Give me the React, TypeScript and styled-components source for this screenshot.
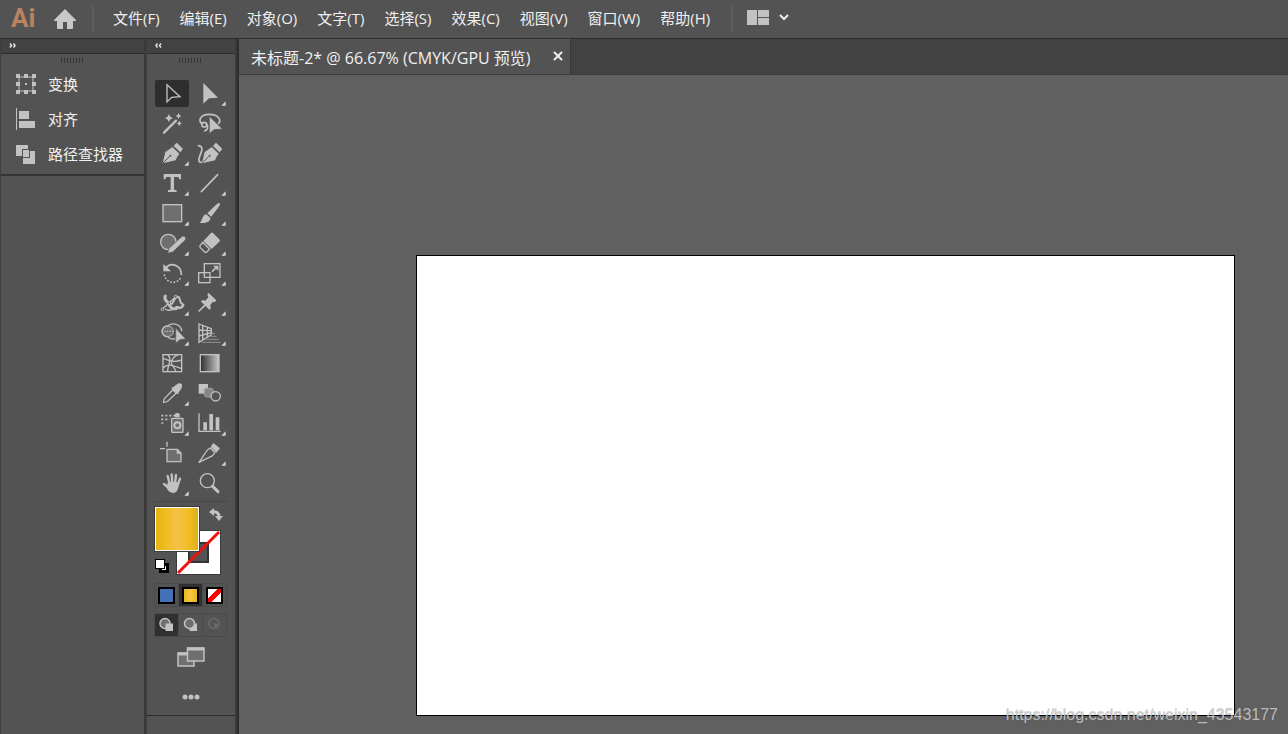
import React from "react";
import styled, { createGlobalStyle } from "styled-components";

const LIGHT = "#c2c2c2";
const MID = "#6f6f6f";
const PANEL = "#535353";
const DARK = "#424242";
const LINE = "#2d2d2d";

const GlobalStyle = createGlobalStyle`
  * { box-sizing: border-box; }
  body {
    margin: 0;
    background: ${PANEL};
    color: #f0f0f0;
    font-family: "Open Sans", "Noto Sans CJK SC", sans-serif;
    font-size: 15px;
  }
  button {
    margin: 0;
    padding: 0;
    border: 0;
    background: none;
    color: inherit;
    font: inherit;
  }
  svg { display: block; }
`;

const Page = styled.div`
  display: flex;
  flex-direction: column;
  min-height: 100vh;
`;

/* ---------- top bar ---------- */

const TopBar = styled.header`
  display: flex;
  align-items: center;
  height: 39px;
  padding-left: 11px;
  border-bottom: 1px solid ${LINE};
  background: ${PANEL};
`;

const Logo = styled.span`
  width: 42px;
  padding-bottom: 2px;
  color: #b98360;
  font-family: Roboto, sans-serif;
  font-size: 26px;
  font-weight: 700;
  line-height: 34px;
`;

const Separator = styled.span`
  width: 2px;
  height: 26px;
  background: #5e5e5e;
`;

const HomeButton = styled.button`
  margin-right: 15px;
`;

const MenuBar = styled.nav`
  display: flex;
  gap: 20px;
  padding: 0 21px 3px 19px;
`;

const MenuItem = styled.button`
  line-height: 34px;
  white-space: nowrap;
`;

const LayoutButton = styled.button`
  display: flex;
  align-items: center;
  gap: 10px;
  margin-left: 14px;
  padding-bottom: 3px;
`;

/* ---------- work area ---------- */

const WorkArea = styled.div`
  display: flex;
  flex: 1;
`;

const Dock = styled.aside<{ $width: number }>`
  display: flex;
  flex-direction: column;
  flex: none;
  width: ${(p) => p.$width}px;
  border-left: 1px solid #3e3e3e;
  border-right: 2px solid #3a3a3a;
  background: ${PANEL};
`;

const DockHeader = styled.button`
  display: flex;
  align-items: center;
  flex: none;
  height: 15px;
  padding: 0 0 1px 8px;
  border-bottom: 1px solid ${LINE};
  background: ${DARK};
`;

const Grip = styled.div`
  width: 24px;
  height: 5px;
  margin: 4px auto 0;
  background: repeating-linear-gradient(90deg, #353535 0 1px, transparent 1px 3px);
`;

const PanelList = styled.div`
  display: flex;
  flex-direction: column;
  padding: 3px 0 3px 14px;
  border-bottom: 2px solid #353535;
`;

const PanelButton = styled.button`
  display: flex;
  align-items: center;
  gap: 11px;
  height: 35px;
`;

const ToolPanel = styled.div`
  display: flex;
  flex-direction: column;
  height: 662px;
  padding: 0 9px 0 8px;
  border-bottom: 1px solid ${LINE};
`;

const ToolGrid = styled.div`
  display: grid;
  grid-template-columns: 34px 34px;
  gap: 3px;
  margin-top: 17px;
`;

const ToolButton = styled.button<{ $active?: boolean }>`
  width: 34px;
  height: 27px;
  border-radius: 2px;
  background: ${(p) => (p.$active ? "#2e2e2e" : "none")};
`;

const Rule = styled.hr`
  height: 1px;
  margin: 4px -2px 5px;
  border: 0;
  background: #484848;
`;

const Proxy = styled.div`
  position: relative;
  height: 67px;
`;

const FillSwatch = styled.button`
  position: absolute;
  left: 0;
  top: 0;
  width: 44px;
  height: 44px;
  border: 1px solid #fff;
  outline: 1px solid #3b3b3b;
  background: linear-gradient(90deg, #e6b312, #f0bd22 25%, #f5c24a 52%, #f0bd22 78%, #dfae18);
`;

const StrokeSwatch = styled.button`
  position: absolute;
  left: 21px;
  top: 23px;
`;

const SwapButton = styled.button`
  position: absolute;
  left: 53px;
  top: 0;
`;

const DefaultButton = styled.button`
  position: absolute;
  left: 0;
  top: 52px;
`;

const Segments = styled.div<{ $top: number }>`
  display: flex;
  flex: none;
  height: 24px;
  margin: ${(p) => p.$top}px -1px 0;
  border: 1px solid #4a4a4a;
  border-radius: 2px;
`;

const Segment = styled.button<{ $active?: boolean }>`
  display: flex;
  align-items: center;
  justify-content: center;
  flex: 1;
  background: ${(p) => (p.$active ? "#303030" : "none")};
  & + & {
    border-left: 1px solid #494949;
  }
`;

const Chip = styled.span<{ $paint: string }>`
  width: 17px;
  height: 17px;
  border: 2px solid #000;
  background: ${(p) => p.$paint};
`;

const ScreenButton = styled.button`
  margin: 10px auto 0;
`;

const MoreButton = styled.button`
  margin: 27px auto 0;
`;

/* ---------- document ---------- */

const DocumentArea = styled.main`
  display: flex;
  flex: 1;
  flex-direction: column;
  min-width: 0;
  border-left: 2px solid ${LINE};
  background: #606060;
`;

const TabBar = styled.div`
  display: flex;
  height: 36px;
  border-bottom: 1px solid #3c3c3c;
  background: ${DARK};
`;

const Tab = styled.div`
  display: flex;
  align-items: center;
  justify-content: space-between;
  width: 332px;
  padding: 0 7px 0 12px;
  border-right: 1px solid #3a3a3a;
  background: ${PANEL};
  font-size: 16px;
  white-space: nowrap;
`;

const CloseButton = styled.button`
  padding-bottom: 2px;
`;

const Canvas = styled.section`
  position: relative;
  display: flex;
  flex: 1;
  padding: 180px 53px 18px 177px;
`;

const Artboard = styled.div`
  flex: 1;
  border: 1px solid #000;
  background: #fff;
`;

const Watermark = styled.span`
  position: absolute;
  right: 10px;
  bottom: 8px;
  color: rgba(205, 205, 205, 0.85);
  font-family: "Liberation Sans", sans-serif;
  font-size: 16px;
  line-height: 22px;
  text-shadow: 0 1px 1px rgba(90, 90, 90, 0.4);
`;

/* ---------- tool icons, drawn on a 102 x 81 grid ---------- */

type Tool = { name: string; art: React.ReactNode; more?: boolean };

const nib = (
  <>
    <path d="M23 70L31 36Q42 29 52 21L73 41Q65 51 62 61Z" fill={LIGHT} />
    <path d="M56 18L63 10Q65 8 67 10L82 25Q84 27 82 29L76 37Z" fill={LIGHT} />
    <path d="M24 69L44 49" stroke={PANEL} strokeWidth="3" />
    <circle cx="46" cy="47" r="3" fill={PANEL} />
  </>
);

const tools: Tool[] = [
  {
    name: "选择工具",
    art: <path d="M36 14V66L50 52L75 50Z" fill="none" stroke={LIGHT} strokeWidth="4" />,
  },
  { name: "直接选择工具", more: true, art: <path d="M34 9V71L51 55L78 53Z" fill={LIGHT} /> },
  {
    name: "魔棒工具",
    art: (
      <g fill={LIGHT}>
        <path d="M27 68L63 32" stroke={LIGHT} strokeWidth="7" strokeLinecap="round" />
        <path d="M42 12Q44 22 54 24Q44 27 42 37Q39 27 30 24Q39 22 42 12Z" />
        <path d="M71 9Q72 16 79 18Q72 20 71 27Q69 20 62 18Q69 16 71 9Z" />
        <path d="M73 32Q74 38 81 40Q74 42 73 49Q71 42 65 40Q71 38 73 32Z" />
      </g>
    ),
  },
  {
    name: "套索工具",
    art: (
      <>
        <g fill="none" stroke={LIGHT} strokeWidth="5">
          <path d="M30 42C18 32 24 13 52 13C80 13 90 32 78 42" />
          <circle cx="37" cy="44" r="7" />
          <path d="M44 42C51 52 46 62 36 63" />
        </g>
        <path d="M52 19V71L66 59L91 57Z" fill={LIGHT} stroke={PANEL} strokeWidth="2" />
      </>
    ),
  },
  { name: "钢笔工具", more: true, art: nib },
  {
    name: "曲率工具",
    art: (
      <>
        <g transform="translate(7 0)">{nib}</g>
        <path
          d="M19 17C35 19 30 32 25 44C20 56 17 67 28 67"
          fill="none"
          stroke={LIGHT}
          strokeWidth="5"
          strokeLinecap="round"
        />
      </>
    ),
  },
  {
    name: "文字工具",
    more: true,
    art: <path d="M26 12H78V28H73L70 21H57V59L65 61V66H39V61L47 59V21H34L31 28H26Z" fill={LIGHT} />,
  },
  {
    name: "直线段工具",
    more: true,
    art: <path d="M28 65L77 14" stroke={LIGHT} strokeWidth="5" strokeLinecap="round" />,
  },
  {
    name: "矩形工具",
    more: true,
    art: <rect x="24" y="14" width="56" height="51" fill={MID} stroke={LIGHT} strokeWidth="4" />,
  },
  {
    name: "画笔工具",
    more: true,
    art: (
      <g fill={LIGHT}>
        <path d="M83 9Q85 12 82 18L58 50L46 40L74 13Q79 8 83 9Z" />
        <path d="M43 43L55 53C56 66 38 71 23 68C33 62 29 45 43 43Z" />
      </g>
    ),
  },
  {
    name: "Shaper 工具",
    more: true,
    art: (
      <>
        <circle cx="40" cy="36" r="23" fill={MID} stroke={LIGHT} strokeWidth="4" />
        <path
          d="M38 70L42 55L79 21Q86 15 91 21Q95 27 89 32L53 66Z"
          fill={LIGHT}
          stroke={PANEL}
          strokeWidth="2"
        />
      </>
    ),
  },
  {
    name: "橡皮擦工具",
    more: true,
    art: (
      <>
        <path d="M57 9Q60 6 63 9L83 29Q85 32 82 35L59 57L34 33Z" fill={LIGHT} />
        <path
          d="M32 37L53 58L44 66Q41 69 38 66L25 53Q22 49 25 46Z"
          fill="none"
          stroke={LIGHT}
          strokeWidth="4"
        />
      </>
    ),
  },
  {
    name: "旋转工具",
    more: true,
    art: (
      <>
        <path d="M33 24C46 5 80 15 79 45" fill="none" stroke={LIGHT} strokeWidth="5" />
        <path d="M25 12V34H48Z" fill={LIGHT} />
        <path
          d="M28 45C34 72 70 75 79 48"
          fill="none"
          stroke={LIGHT}
          strokeWidth="5"
          strokeLinecap="round"
          strokeDasharray="1 9"
        />
      </>
    ),
  },
  {
    name: "比例缩放工具",
    more: true,
    art: (
      <g fill="none" stroke={LIGHT} strokeWidth="4">
        <rect x="37" y="11" width="47" height="41" />
        <rect x="20" y="38" width="34" height="30" />
        <path d="M60 35L74 21" strokeWidth="5" />
        <path d="M63 17H79V33Z" fill={LIGHT} stroke="none" />
      </g>
    ),
  },
  {
    name: "宽度工具",
    more: true,
    art: (
      <>
        <g fill="none" stroke={LIGHT} strokeLinecap="round">
          <path d="M31 18C24 32 40 34 43 44C47 56 58 60 68 53" strokeWidth="9" />
          <path d="M64 51C72 56 82 53 85 45" strokeWidth="7" />
          <path d="M50 42C58 36 56 22 68 20C78 20 70 36 82 42" strokeWidth="6" />
          <path d="M22 58L62 20" strokeWidth="4" />
          <path d="M32 58Q44 64 56 57" strokeWidth="4" />
        </g>
        <g fill={PANEL} stroke={LIGHT} strokeWidth="3">
          <circle cx="22" cy="58" r="4" />
          <circle cx="43" cy="39" r="4" />
          <circle cx="62" cy="20" r="4" />
        </g>
      </>
    ),
  },
  {
    name: "操控变形工具",
    more: true,
    art: (
      <>
        <path
          d="M46 13L50 9L73 31L69 36L63 35L54 46Q59 54 53 60L26 34Q32 28 40 32L49 22Z"
          fill={LIGHT}
        />
        <path d="M38 47L21 63" stroke={LIGHT} strokeWidth="5" strokeLinecap="round" />
      </>
    ),
  },
  {
    name: "形状生成器工具",
    more: true,
    art: (
      <>
        <ellipse cx="38" cy="34" rx="17" ry="16" fill={MID} stroke="#9a9a9a" strokeWidth="4" />
        <path
          d="M38 18C52 6 79 12 80 34M38 50C48 60 56 58 64 56M38 50C16 50 16 18 38 18"
          fill="none"
          stroke={LIGHT}
          strokeWidth="4"
        />
        <path d="M28 34H58" stroke={LIGHT} strokeWidth="4" strokeDasharray="4 4" />
        <path d="M62 24V70L75 59L92 57Z" fill={LIGHT} stroke={PANEL} strokeWidth="2" />
      </>
    ),
  },
  {
    name: "透视网格工具",
    more: true,
    art: (
      <>
        <path
          d="M21 12L58 26V44L21 67ZM32 16V60M46 22V51M21 30L58 32M21 48L58 38"
          fill="none"
          stroke={LIGHT}
          strokeWidth="4"
        />
        <path d="M59 40H69M51 49H74M40 58H80M30 67H86" stroke="#929292" strokeWidth="3" />
      </>
    ),
  },
  {
    name: "网格工具",
    art: (
      <g fill="none" stroke={LIGHT} strokeWidth="4">
        <rect x="24" y="14" width="56" height="51" />
        <path d="M24 26C38 26 46 42 80 30M24 54C38 38 56 48 80 56M38 14C54 28 36 48 38 65M68 14C50 24 46 38 52 46C56 52 62 58 62 65" />
      </g>
    ),
  },
  {
    name: "渐变工具",
    art: (
      <>
        <defs>
          <linearGradient id="grey-ramp">
            <stop offset="0" stopColor="#2f2f2f" />
            <stop offset="1" stopColor="#c8c8c8" />
          </linearGradient>
        </defs>
        <rect x="25" y="14" width="56" height="51" fill="url(#grey-ramp)" stroke={LIGHT} strokeWidth="4" />
      </>
    ),
  },
  {
    name: "吸管工具",
    more: true,
    art: (
      <>
        <path
          d="M54 29L64 39L38 64Q34 67 26 67Q25 60 29 55Z"
          fill="none"
          stroke={LIGHT}
          strokeWidth="4"
        />
        <path
          d="M50 23L56 20L67 12Q73 7 80 12Q84 18 79 26L72 36L69 43L62 40L50 28Z"
          fill={LIGHT}
        />
      </>
    ),
  },
  {
    name: "混合工具",
    art: (
      <>
        <rect x="20" y="12" width="28" height="29" fill={LIGHT} />
        <rect x="37" y="25" width="27" height="26" rx="7" fill="#858585" stroke="#a0a0a0" strokeWidth="3" />
        <circle cx="71" cy="49" r="14" fill={PANEL} stroke={LIGHT} strokeWidth="4" />
      </>
    ),
  },
  {
    name: "符号喷枪工具",
    more: true,
    art: (
      <>
        <path
          d="M19 17H60M19 28H44M19 39H30"
          stroke={LIGHT}
          strokeWidth="5"
          strokeDasharray="6 6"
        />
        <path d="M60 11Q67 7 74 11V22H60Z" fill={LIGHT} />
        <rect x="50" y="25" width="34" height="42" rx="2" fill={MID} stroke={LIGHT} strokeWidth="4" />
        <circle cx="67" cy="46" r="9" fill="none" stroke={LIGHT} strokeWidth="6" />
      </>
    ),
  },
  {
    name: "柱形图工具",
    more: true,
    art: (
      <>
        <path d="M21 10V64H86" fill="none" stroke={LIGHT} strokeWidth="4" />
        <path d="M34 37H45V61H34ZM52 12H63V61H52ZM71 22H82V61H71Z" fill={LIGHT} />
      </>
    ),
  },
  {
    name: "画板工具",
    art: (
      <>
        <path d="M36 5V20M15 26H30" stroke={LIGHT} strokeWidth="4" />
        <path d="M36 28H67L78 39V65H36Z" fill={MID} stroke={LIGHT} strokeWidth="4" />
        <path d="M65 26L80 41H65Z" fill={LIGHT} />
      </>
    ),
  },
  {
    name: "切片工具",
    more: true,
    art: (
      <>
        <path
          d="M21 67L46 30L55 24L69 38L62 47Z"
          fill="none"
          stroke={LIGHT}
          strokeWidth="4"
          strokeLinejoin="round"
        />
        <path d="M56 20L64 9L84 25L73 38Z" fill={LIGHT} />
      </>
    ),
  },
  {
    name: "抓手工具",
    more: true,
    art: (
      <>
        <g stroke={LIGHT} strokeWidth="7" strokeLinecap="round">
          <path d="M38 18L44 42M50 13L52 40M63 15L60 42M75 26L67 48M27 42L42 54" />
        </g>
        <path d="M39 36H67L71 42Q70 69 54 69Q41 69 34 52Z" fill={LIGHT} />
      </>
    ),
  },
  {
    name: "缩放工具",
    art: (
      <>
        <circle cx="46" cy="32" r="21" fill={PANEL} stroke={LIGHT} strokeWidth="4" />
        <path d="M62 49L78 65" stroke={LIGHT} strokeWidth="9" strokeLinecap="round" />
      </>
    ),
  },
];

const menus = [
  "文件(F)",
  "编辑(E)",
  "对象(O)",
  "文字(T)",
  "选择(S)",
  "效果(C)",
  "视图(V)",
  "窗口(W)",
  "帮助(H)",
];

const TransformIcon = () => (
  <svg width="22" height="22" viewBox="0 0 22 22">
    <rect x="4" y="4" width="14" height="14" fill="none" stroke={LIGHT} strokeWidth="1" />
    <path
      d="M1 1h4v4h-4zM9 1h4v4h-4zM17 1h4v4h-4zM1 9h4v4h-4zM17 9h4v4h-4zM1 17h4v4h-4zM9 17h4v4h-4zM17 17h4v4h-4zM10 10h2v2h-2z"
      fill={LIGHT}
    />
  </svg>
);

const AlignIcon = () => (
  <svg width="22" height="24" viewBox="0 0 22 24">
    <path d="M1 1h1v22h-1zM4 4h10v8h-10zM4 14h16v7h-16z" fill={LIGHT} />
  </svg>
);

const PathfinderIcon = () => (
  <svg width="22" height="22" viewBox="0 0 22 22">
    <path d="M1 2h12v4h-6v7h-6zM20 8v13h-12v-6h7v-7z" fill={LIGHT} />
    <rect x="8" y="7" width="6" height="7" fill={LIGHT} />
  </svg>
);

const panels = [
  { label: "变换", Icon: TransformIcon },
  { label: "对齐", Icon: AlignIcon },
  { label: "路径查找器", Icon: PathfinderIcon },
];

const Chevrons = ({ left }: { left?: boolean }) => (
  <svg width="7" height="5" viewBox="0 0 14 10">
    <path
      d={left ? "M5 1L2 5L5 9M12 1L9 5L12 9" : "M2 1L5 5L2 9M9 1L12 5L9 9"}
      fill="none"
      stroke="#e4e4e4"
      strokeWidth="3"
    />
  </svg>
);

const DrawMode = ({ mode }: { mode: "normal" | "behind" | "inside" }) => (
  <svg width="16" height="16" viewBox="0 0 32 32">
    {mode === "normal" && (
      <>
        <circle cx="12" cy="13" r="10" fill={MID} stroke={LIGHT} strokeWidth="3" />
        <rect x="13" y="13" width="15" height="15" fill={LIGHT} />
      </>
    )}
    {mode === "behind" && (
      <>
        <rect x="13" y="13" width="15" height="15" fill={LIGHT} />
        <circle cx="13" cy="13" r="10" fill={MID} stroke={LIGHT} strokeWidth="3" />
      </>
    )}
    {mode === "inside" && (
      <>
        <circle cx="14" cy="13" r="10" fill="none" stroke="#6b6b6b" strokeWidth="3" />
        <path d="M14 13H22Q21 21 14 21Z" fill="#6b6b6b" />
      </>
    )}
  </svg>
);

export default function App() {
  return (
    <>
      <GlobalStyle />
      <Page>
        <TopBar>
          <Logo>Ai</Logo>
          <HomeButton aria-label="主页">
            <svg width="24" height="20" viewBox="0 0 24 20">
              <path d="M12 0L23 11V12H20V19Q20 20 19 20H14V13H10V20H5Q4 20 4 19V12H1V11Z" fill="#c8c8c8" />
            </svg>
          </HomeButton>
          <Separator />
          <MenuBar>
            {menus.map((label) => (
              <MenuItem key={label}>{label}</MenuItem>
            ))}
          </MenuBar>
          <Separator />
          <LayoutButton aria-label="排列文档">
            <svg width="22" height="15" viewBox="0 0 22 15">
              <path d="M0 0h10v15h-10zM11 0h11v7h-11zM11 8h11v7h-11z" fill={LIGHT} />
            </svg>
            <svg width="10" height="7" viewBox="0 0 10 7">
              <path d="M1 1L5 5L9 1" fill="none" stroke="#f0f0f0" strokeWidth="2" />
            </svg>
          </LayoutButton>
        </TopBar>

        <WorkArea>
          <Dock $width={146}>
            <DockHeader aria-label="展开面板">
              <Chevrons />
            </DockHeader>
            <Grip />
            <PanelList>
              {panels.map(({ label, Icon }) => (
                <PanelButton key={label}>
                  <Icon />
                  {label}
                </PanelButton>
              ))}
            </PanelList>
          </Dock>

          <Dock $width={91}>
            <DockHeader aria-label="折叠工具栏">
              <Chevrons left />
            </DockHeader>
            <ToolPanel>
              <Grip />
              <ToolGrid>
                {tools.map((tool, i) => (
                  <ToolButton key={tool.name} aria-label={tool.name} $active={i === 0}>
                    <svg width="34" height="27" viewBox="0 0 102 81">
                      {tool.art}
                      {tool.more && <path d="M101 64V77H88Z" fill="#d6d6d6" />}
                    </svg>
                  </ToolButton>
                ))}
              </ToolGrid>
              <Rule />
              <Proxy>
                <StrokeSwatch aria-label="描边">
                  <svg width="45" height="45" viewBox="0 0 45 45">
                    <rect width="45" height="45" fill="#3b3b3b" />
                    <rect x="1" y="1" width="43" height="43" fill="#fff" />
                    <rect x="13" y="13" width="19" height="19" fill={PANEL} stroke="#333" strokeWidth="2" />
                    <path d="M2 43L43 2" stroke="#f0100c" strokeWidth="3" />
                  </svg>
                </StrokeSwatch>
                <FillSwatch aria-label="填色" />
                <SwapButton aria-label="互换填色和描边">
                  <svg width="16" height="16" viewBox="0 0 16 16">
                    <path d="M4 5Q11 4 11 10" fill="none" stroke={LIGHT} strokeWidth="3" />
                    <path d="M1 5L6 1V9ZM7 9H15L11 14Z" fill={LIGHT} />
                  </svg>
                </SwapButton>
                <DefaultButton aria-label="默认填色和描边">
                  <svg width="14" height="14" viewBox="0 0 14 14">
                    <rect x="4" y="4" width="10" height="10" fill="#000" />
                    <rect x="7" y="7" width="4" height="4" fill="#fff" />
                    <rect x="0" y="0" width="10" height="10" fill="#000" />
                    <rect x="1" y="1" width="8" height="8" fill="#fff" />
                  </svg>
                </DefaultButton>
              </Proxy>
              <Segments $top={9}>
                <Segment aria-label="颜色">
                  <Chip $paint="#4470b8" />
                </Segment>
                <Segment aria-label="渐变" $active>
                  <Chip $paint="linear-gradient(90deg, #eab71c, #f7c546, #eab71c)" />
                </Segment>
                <Segment aria-label="无">
                  <Chip $paint="linear-gradient(135deg, #fff 38%, #f00 38% 62%, #fff 62%)" />
                </Segment>
              </Segments>
              <Segments $top={6}>
                <Segment aria-label="正常绘图" $active>
                  <DrawMode mode="normal" />
                </Segment>
                <Segment aria-label="背面绘图">
                  <DrawMode mode="behind" />
                </Segment>
                <Segment aria-label="内部绘图">
                  <DrawMode mode="inside" />
                </Segment>
              </Segments>
              <ScreenButton aria-label="更改屏幕模式">
                <svg width="28" height="20" viewBox="0 0 56 40">
                  <rect x="2" y="12" width="32" height="26" fill={MID} stroke={LIGHT} strokeWidth="3" />
                  <rect x="2" y="11" width="32" height="6" fill={LIGHT} />
                  <rect x="21" y="2" width="33" height="26" fill={MID} stroke={LIGHT} strokeWidth="3" />
                  <rect x="21" y="1" width="33" height="6" fill={LIGHT} />
                </svg>
              </ScreenButton>
              <MoreButton aria-label="编辑工具栏">
                <svg width="18" height="6" viewBox="0 0 36 12">
                  <g fill={LIGHT}>
                    <circle cx="6" cy="6" r="5" />
                    <circle cx="18" cy="6" r="5" />
                    <circle cx="30" cy="6" r="5" />
                  </g>
                </svg>
              </MoreButton>
            </ToolPanel>
          </Dock>

          <DocumentArea>
            <TabBar>
              <Tab>
                <span>未标题-2* @ 66.67% (CMYK/GPU 预览)</span>
                <CloseButton aria-label="关闭">
                  <svg width="10" height="10" viewBox="0 0 10 10">
                    <path d="M1 1L9 9M9 1L1 9" stroke="#f0f0f0" strokeWidth="2" />
                  </svg>
                </CloseButton>
              </Tab>
            </TabBar>
            <Canvas>
              <Artboard />
              <Watermark>https://blog.csdn.net/weixin_43543177</Watermark>
            </Canvas>
          </DocumentArea>
        </WorkArea>
      </Page>
    </>
  );
}
